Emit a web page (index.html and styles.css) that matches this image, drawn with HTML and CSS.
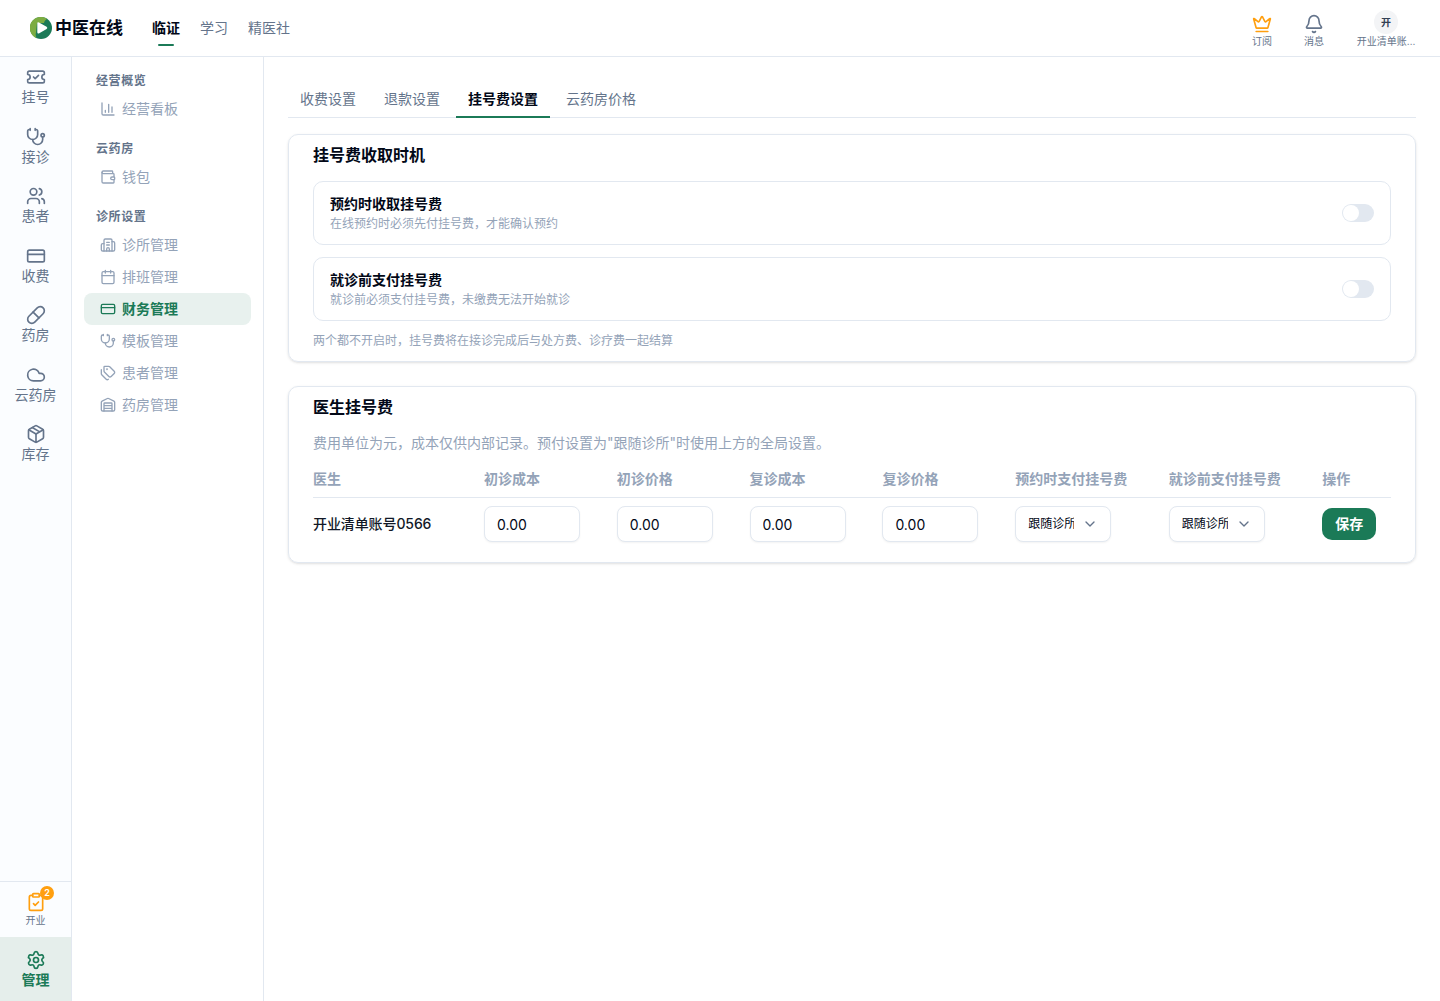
FILE: index.html
```html
<!DOCTYPE html>
<html lang="zh-CN">
<head>
<meta charset="utf-8">
<title>中医在线</title>
<link rel="stylesheet" href="styles.css">
</head>
<body>
<svg class="defs" width="0" height="0">
  <symbol id="card" viewBox="0 0 24 24"><rect width="20" height="14" x="2" y="5" rx="2"/><path d="M2 10h20"/></symbol>
  <symbol id="steth" viewBox="0 0 24 24"><path d="M11 2v2M5 2v2M5 3H4a2 2 0 0 0-2 2v4a6 6 0 0 0 12 0V5a2 2 0 0 0-2-2h-1"/><path d="M8 15a6 6 0 0 0 12 0v-3"/><circle cx="20" cy="10" r="2"/></symbol>
  <symbol id="chevron" viewBox="0 0 24 24"><path d="m6 9 6 6 6-6"/></symbol>
</svg>
<header class="topbar">
  <div class="brand">
    <svg class="logo" viewBox="0 0 22 22"><circle cx="11" cy="11" r="11" fill="#1b7a57"/><path d="M17 1.8A11 11 0 1 0 6.5 21C5.600 19 5.500 17.500 6 15.500L7 6L14 6C14.500 4 15.500 3 17 1.800Z" fill="#7cac42"/><path d="M7.300 6.500Q7.300 4.600 9 5.400L16.600 9.800Q18.200 11 16.600 12.100L9.300 16.300Q7.300 17.200 7.300 15.200Z" fill="#fff"/></svg>
    <span>中医在线</span>
  </div>
  <nav class="topnav"><a class="on">临证</a><a>学习</a><a>精医社</a></nav>
  <div class="tools">
    <a class="tool tool-amber"><svg class="i20" viewBox="0 0 24 24"><path d="M11.562 3.266a.5.5 0 0 1 .876 0L15.390 8.870a1 1 0 0 0 1.516.294L21.183 5.500a.5.5 0 0 1 .798.519l-2.834 10.246a1 1 0 0 1-.956.734H5.810a1 1 0 0 1-.957-.734L2.020 6.020a.5.5 0 0 1 .798-.519l4.276 3.664a1 1 0 0 0 1.516-.294z"/><path d="M5 21h14"/></svg><span>订阅</span></a>
    <a class="tool"><svg class="i20" viewBox="0 0 24 24"><path d="M10.268 21a2 2 0 0 0 3.464 0"/><path d="M3.262 15.326A1 1 0 0 0 4 17h16a1 1 0 0 0 .740-1.673C19.410 13.956 18 12.499 18 8A6 6 0 0 0 6 8c0 4.499-1.411 5.956-2.738 7.326"/></svg><span>消息</span></a>
    <a class="tool account"><b class="avatar">开</b><span>开业清单账…</span></a>
  </div>
</header>
<div class="body">
  <aside class="rail">
    <a class="rail-item"><svg class="i20" viewBox="0 0 24 24"><path d="M2 9a3 3 0 1 1 0 6v2a2 2 0 0 0 2 2h16a2 2 0 0 0 2-2v-2a3 3 0 1 1 0-6V7a2 2 0 0 0-2-2H4a2 2 0 0 0-2 2Z"/><path d="m9 12 2 2 4-4"/></svg>挂号</a>
    <a class="rail-item"><svg class="i20"><use href="#steth"/></svg>接诊</a>
    <a class="rail-item"><svg class="i20" viewBox="0 0 24 24"><path d="M16 21v-2a4 4 0 0 0-4-4H6a4 4 0 0 0-4 4v2"/><circle cx="9" cy="7" r="4"/><path d="M22 21v-2a4 4 0 0 0-3-3.870M16 3.130a4 4 0 0 1 0 7.750"/></svg>患者</a>
    <a class="rail-item"><svg class="i20"><use href="#card"/></svg>收费</a>
    <a class="rail-item"><svg class="i20" viewBox="0 0 24 24"><path d="m10.500 20.500 10-10a4.950 4.950 0 1 0-7-7l-10 10a4.950 4.950 0 1 0 7 7Z"/><path d="m8.500 8.500 7 7"/></svg>药房</a>
    <a class="rail-item"><svg class="i20" viewBox="0 0 24 24"><path d="M17.500 19H9a7 7 0 1 1 6.710-9h1.790a4.500 4.500 0 1 1 0 9Z"/></svg>云药房</a>
    <a class="rail-item"><svg class="i20" viewBox="0 0 24 24"><path d="M11 21.730a2 2 0 0 0 2 0l7-4A2 2 0 0 0 21 16V8a2 2 0 0 0-1-1.730l-7-4a2 2 0 0 0-2 0l-7 4A2 2 0 0 0 3 8v8a2 2 0 0 0 1 1.730zM12 22V12"/><path d="M3.290 7 12 12l8.710-5M7.500 4.270l9 5.150"/></svg>库存</a>
    <a class="opening"><svg class="i20" viewBox="0 0 24 24"><rect width="8" height="4" x="8" y="2" rx="1"/><path d="M16 4h2a2 2 0 0 1 2 2v14a2 2 0 0 1-2 2H6a2 2 0 0 1-2-2V6a2 2 0 0 1 2-2h2"/><path d="m9 14 2 2 4-4"/></svg><i class="badge">2</i><span>开业</span></a>
    <a class="manage"><svg class="i20" viewBox="0 0 24 24"><path d="M9.671 4.136a2.340 2.340 0 0 1 4.659 0 2.340 2.340 0 0 0 3.319 1.915 2.340 2.340 0 0 1 2.330 4.033 2.340 2.340 0 0 0 0 3.831 2.340 2.340 0 0 1-2.330 4.033 2.340 2.340 0 0 0-3.319 1.915 2.340 2.340 0 0 1-4.659 0 2.340 2.340 0 0 0-3.320-1.915 2.340 2.340 0 0 1-2.330-4.033 2.340 2.340 0 0 0 0-3.831A2.340 2.340 0 0 1 6.350 6.051a2.340 2.340 0 0 0 3.319-1.915"/><circle cx="12" cy="12" r="3"/></svg>管理</a>
  </aside>
  <aside class="side">
    <h4>经营概览</h4>
    <a><svg class="i16" viewBox="0 0 24 24"><path d="M3 3v16a2 2 0 0 0 2 2h16M18 17V9M13 17V5M8 17v-3"/></svg>经营看板</a>
    <h4>云药房</h4>
    <a><svg class="i16" viewBox="0 0 24 24"><path d="M19 7V4a1 1 0 0 0-1-1H5a2 2 0 0 0 0 4h15a1 1 0 0 1 1 1v4h-3a2 2 0 0 0 0 4h3a1 1 0 0 0 1-1v-2a1 1 0 0 0-1-1"/><path d="M3 5v14a2 2 0 0 0 2 2h15a1 1 0 0 0 1-1v-4"/></svg>钱包</a>
    <h4>诊所设置</h4>
    <a><svg class="i16" viewBox="0 0 24 24"><path d="M10 12h4M10 8h4M14 21v-3a2 2 0 0 0-4 0v3"/><path d="M6 10H4a2 2 0 0 0-2 2v7a2 2 0 0 0 2 2h16a2 2 0 0 0 2-2V9a2 2 0 0 0-2-2h-2"/><path d="M6 21V5a2 2 0 0 1 2-2h8a2 2 0 0 1 2 2v16"/></svg>诊所管理</a>
    <a><svg class="i16" viewBox="0 0 24 24"><path d="M8 2v4M16 2v4M3 10h18"/><rect width="18" height="18" x="3" y="4" rx="2"/></svg>排班管理</a>
    <a class="on"><svg class="i16"><use href="#card"/></svg>财务管理</a>
    <a><svg class="i16"><use href="#steth"/></svg>模板管理</a>
    <a><svg class="i16" viewBox="0 0 24 24"><path d="M13.172 2a2 2 0 0 1 1.414.586l6.710 6.710a2.400 2.400 0 0 1 0 3.408l-4.592 4.592a2.400 2.400 0 0 1-3.408 0l-6.710-6.710A2 2 0 0 1 6 9.172V3a1 1 0 0 1 1-1zM2 7v6.172a2 2 0 0 0 .586 1.414l6.710 6.710a2.400 2.400 0 0 0 3.191.193"/><circle cx="10.500" cy="6.500" r=".5"/></svg>患者管理</a>
    <a><svg class="i16" viewBox="0 0 24 24"><path d="M18 21V10a1 1 0 0 0-1-1H7a1 1 0 0 0-1 1v11M6 13h12M6 17h12"/><path d="M22 19a2 2 0 0 1-2 2H4a2 2 0 0 1-2-2V8a2 2 0 0 1 1.132-1.803l7.950-3.974a2 2 0 0 1 1.837 0l7.948 3.974A2 2 0 0 1 22 8z"/></svg>药房管理</a>
  </aside>
  <main>
    <nav class="tabs"><a>收费设置</a><a>退款设置</a><a class="on">挂号费设置</a><a>云药房价格</a></nav>
    <section class="panel timing">
      <h2>挂号费收取时机</h2>
      <div class="option"><div><h3>预约时收取挂号费</h3><p>在线预约时必须先付挂号费，才能确认预约</p></div><span class="switch"></span></div>
      <div class="option"><div><h3>就诊前支付挂号费</h3><p>就诊前必须支付挂号费，未缴费无法开始就诊</p></div><span class="switch"></span></div>
      <p>两个都不开启时，挂号费将在接诊完成后与处方费、诊疗费一起结算</p>
    </section>
    <section class="panel doctors">
      <h2>医生挂号费</h2>
      <p class="note">费用单位为元，成本仅供内部记录。预付设置为"跟随诊所"时使用上方的全局设置。</p>
      <table>
        <colgroup><col class="c-name"><col class="c-fee"><col class="c-fee"><col class="c-fee"><col class="c-fee"><col class="c-mode"><col class="c-mode"><col></colgroup>
        <thead><tr><th>医生</th><th>初诊成本</th><th>初诊价格</th><th>复诊成本</th><th>复诊价格</th><th>预约时支付挂号费</th><th>就诊前支付挂号费</th><th>操作</th></tr></thead>
        <tbody><tr>
          <td class="name">开业清单账号0566</td>
          <td><input class="field" value="0.00"></td><td><input class="field" value="0.00"></td><td><input class="field" value="0.00"></td><td><input class="field" value="0.00"></td>
          <td><div class="field select"><span>跟随诊所</span><svg class="i16"><use href="#chevron"/></svg></div></td>
          <td><div class="field select"><span>跟随诊所</span><svg class="i16"><use href="#chevron"/></svg></div></td>
          <td><button class="save">保存</button></td>
        </tr></tbody>
      </table>
    </section>
  </main>
</div>
</body>
</html>
```
FILE: styles.css
```css
:root { --ink: #020817; --slate: #64748b; --muted: #94a3b8; --line: #e2e8f0; --green: #1b7a57; --amber: #ff9f0f; }
* { box-sizing: border-box; margin: 0; padding: 0; }
body { height: 1001px; display: flex; flex-direction: column; overflow: hidden; background: #fff; color: var(--ink); font: 14px/20px Inter, "Noto Sans CJK SC", sans-serif; }
svg { fill: none; stroke: currentColor; stroke-width: 2; stroke-linecap: round; stroke-linejoin: round; flex: none; display: block; }
.defs { position: absolute; }
.i20 { width: 20px; height: 20px; }
.i16 { width: 16px; height: 16px; }

.topbar { height: 57px; flex: none; display: flex; align-items: center; border-bottom: 1px solid var(--line); padding: 0 24px 0 30px; }
.brand { display: flex; align-items: center; gap: 3px; width: 122px; font-size: 17px; font-weight: 600; }
.logo { width: 22px; height: 22px; stroke: none; }
.topnav { display: flex; gap: 20px; height: 56px; color: var(--slate); }
.topnav a { display: flex; flex-direction: column; align-items: center; padding-top: 18px; }
.topnav .on { color: var(--ink); font-weight: 600; }
.topnav .on::after { content: ""; width: 16px; height: 2px; margin-top: 6px; border-radius: 1px; background: var(--green); }
.tools { margin-left: auto; display: flex; gap: 32px; height: 56px; font-size: 10px; line-height: 15px; color: var(--slate); }
.tool { display: flex; flex-direction: column; align-items: center; padding-top: 14px; }
.tool-amber svg { color: var(--amber); }
.account { width: 60px; padding-top: 10px; }
.account span { white-space: nowrap; }
.avatar { width: 24px; height: 24px; border-radius: 50%; background: #f3f4f6; color: #334155; text-align: center; line-height: 24px; font-weight: 600; }

.body { flex: 1; display: flex; min-height: 0; }
.rail { width: 72px; display: flex; flex-direction: column; border-right: 1px solid var(--line); background: #fbfdff; color: var(--slate); }
.rail-item { height: 59.5px; padding-top: 10px; display: flex; flex-direction: column; align-items: center; }
.opening { position: relative; margin-top: auto; height: 56px; border-top: 1px solid var(--line); padding-top: 10px; display: flex; flex-direction: column; align-items: center; font-size: 10px; line-height: 16px; }
.opening svg { color: var(--amber); }
.badge { position: absolute; left: 40px; top: 4px; width: 14px; height: 14px; border-radius: 50%; background: var(--amber); color: #fff; font: 600 9px/14px Inter, sans-serif; text-align: center; }
.manage { height: 64px; padding-top: 13px; display: flex; flex-direction: column; align-items: center; background: #e5eeeb; color: var(--green); font-weight: 600; }

.side { width: 192px; flex: none; padding: 16px 12px; border-right: 1px solid var(--line); color: var(--muted); }
.side h4 { padding-left: 12px; font-size: 12px; line-height: 16px; font-weight: 600; letter-spacing: .6px; color: var(--slate); margin-bottom: 4px; }
.side a + h4 { margin-top: 16px; }
.side a { height: 32px; padding-left: 16px; display: flex; align-items: center; gap: 6px; border-radius: 8px; }
.side .on { background: #e8f1ee; color: var(--green); font-weight: 600; }

main { flex: 1; padding: 24px; }
.tabs { display: flex; gap: 4px; height: 37px; border-bottom: 1px solid var(--line); color: var(--slate); }
.tabs a { height: 37px; padding: 8px 12px; }
.tabs .on { color: var(--ink); font-weight: 600; border-bottom: 2px solid var(--green); }
.panel { border: 1px solid var(--line); border-radius: 10px; box-shadow: 0 1px 3px rgba(0,0,0,.1), 0 1px 2px -1px rgba(0,0,0,.1); padding: 8px 24px 0; }
.panel h2 { font-size: 16px; line-height: 24px; font-weight: 600; }
.timing { margin-top: 16px; height: 228px; }
.timing h2 { margin-bottom: 14px; }
.timing p { font-size: 12px; line-height: 16px; color: var(--muted); }
.option { height: 64px; margin-bottom: 12px; padding: 0 16px; display: flex; align-items: center; justify-content: space-between; border: 1px solid var(--line); border-radius: 10px; }
.option h3 { font-size: 14px; line-height: 20px; font-weight: 600; margin-bottom: 2px; }
.switch { width: 32px; height: 18px; padding: 1px; border-radius: 9px; background: var(--line); }
.switch::before { content: ""; display: block; width: 16px; height: 16px; border-radius: 50%; background: #fff; }

.doctors { margin-top: 24px; height: 177px; }
.note { margin: 14px 0 6px; color: var(--muted); }
table { width: 1078px; table-layout: fixed; border-collapse: collapse; text-align: left; }
.c-name { width: 171px; } .c-fee { width: 132.800px; } .c-mode { width: 153.500px; }
th { height: 38px; padding-top: 2px; font-weight: 600; color: var(--muted); border-bottom: 1px solid var(--line); }
td { height: 53px; padding-top: 1px; vertical-align: middle; }
.name { font-weight: 500; color: #111827; white-space: nowrap; letter-spacing: -.1px; }
.field { display: block; width: 96px; height: 36px; padding: 0 12px; border: 1px solid var(--line); border-radius: 8px; box-shadow: 0 1px 2px rgba(0,0,0,.05); background: #fff; color: var(--ink); font: inherit; }
.select { display: flex; align-items: center; justify-content: space-between; font-size: 12px; }
.select span { width: 46px; overflow: hidden; white-space: nowrap; }
.select svg { color: var(--slate); }
.save { display: block; width: 54px; height: 32px; border: 0; border-radius: 10px; background: var(--green); color: #fff; font: inherit; font-weight: 600; }
```
